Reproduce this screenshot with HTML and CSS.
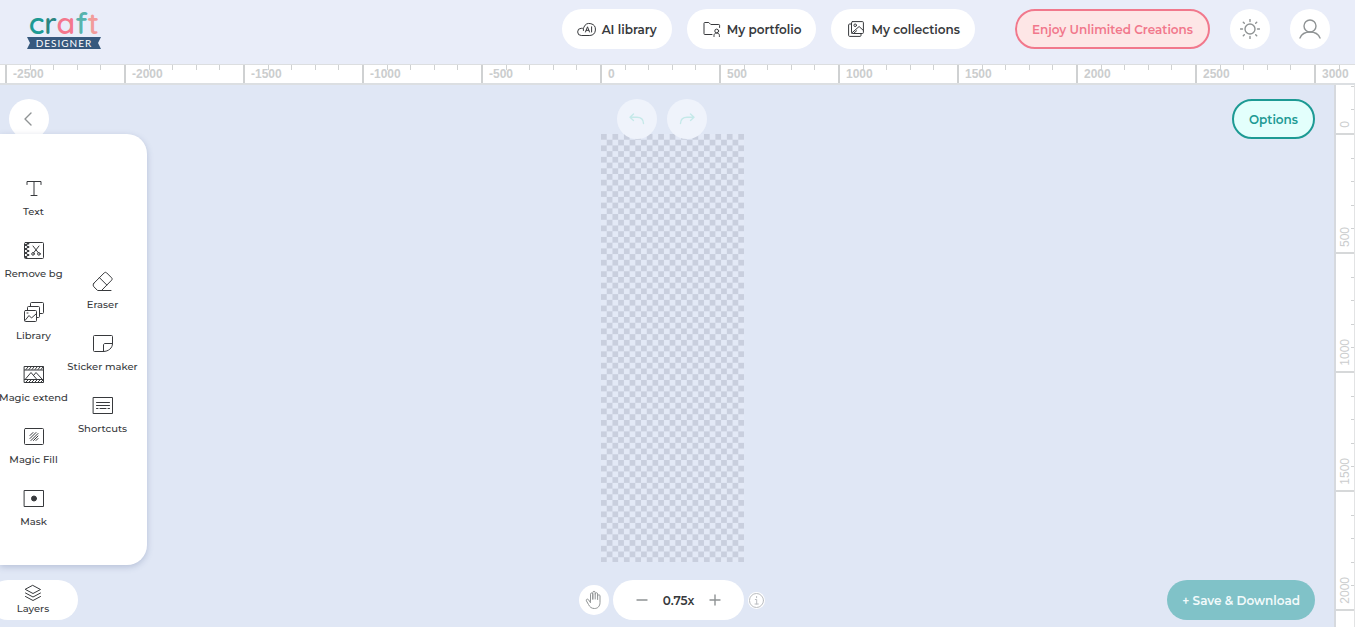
FILE: index.html
```html
<!DOCTYPE html>
<html lang="en">
<head>
  <meta charset="UTF-8">
  <meta name="viewport" content="width=device-width, initial-scale=1.0">
  <title>Craft Designer</title>
  <link rel="stylesheet" href="styles.css">
</head>
<body>
  <header class="header">
    <a href="#" class="logo" aria-label="Craft Designer">
      <span class="logo-word"><span class="c1">c</span><span class="c2">r</span><span class="c3">a</span><span class="c4">f</span><span class="c5">t</span></span>
      <span class="logo-ribbon">DESIGNER</span>
    </a>

    <nav class="nav">
      <a href="#" class="pill">
        <svg width="20" height="18" viewBox="0 0 20 18" class="icon dark">
          <path d="M5.500 15.500H4.300a3.600 3.600 0 0 1-.1-7.200h1.200M5.500 15.500h7.300A6 6 0 1 0 6.900 7.200c-.6 1.100-.7 2-.5 3.300"/>
          <path d="M8.500 12l2-5.200 2 5.200M9.200 10.300h2.600M14.600 6.800V12"/>
        </svg>
        AI library
      </a>
      <a href="#" class="pill">
        <svg width="20" height="16" viewBox="0 0 18 16" class="icon dark">
          <path d="M9 13.500H1.800a.8.8 0 0 1-.8-.8V2.300c0-.5.3-.8.8-.8h4l2 2h8c.5 0 .8.300.8.800v2.200"/>
          <circle cx="13.700" cy="10" r="1.900"/>
          <path d="M11 15.500v-1.200c0-1.300 1-2.200 2.700-2.200s2.700.900 2.700 2.200v1.200"/>
        </svg>
        My portfolio
      </a>
      <a href="#" class="pill">
        <svg width="20" height="16" viewBox="0 0 16 16" class="icon dark">
          <rect x="3.500" y=".6" width="11.900" height="11.900" rx="1"/>
          <path d="M3.500 3H1.600c-.6 0-1 .4-1 1v10.400c0 .6.4 1 1 1H12c.6 0 1-.4 1-1v-1.900"/>
          <circle cx="7.200" cy="4.300" r="1.300"/>
          <path d="M3.800 12l7.300-6.500 4.100 3.800M5.600 12.400l3-2.600"/>
        </svg>
        My collections
      </a>
    </nav>

    <button class="pill promo">Enjoy Unlimited Creations</button>
    <button class="round" aria-label="Theme">
      <svg width="20" height="20" viewBox="0 0 20 20" class="icon gray">
        <circle cx="10" cy="10" r="5"/>
        <path d="M10 .5v2M10 17.500v2M.5 10h2M17.500 10h2M3.300 3.300l1 1M15.700 15.700l1 1M3.300 16.700l1-1M15.700 4.300l1-1"/>
      </svg>
    </button>
    <button class="round" aria-label="Account">
      <svg width="22" height="20" viewBox="0 0 22 20" class="icon gray">
        <circle cx="11" cy="7" r="6"/>
        <path d="M1 19c1.500-3.800 5.300-6 10-6s8.500 2.200 10 6"/>
      </svg>
    </button>
  </header>

  <div class="ruler-x" id="ruler-x"></div>

  <main class="workspace">
    <section class="stage">
      <svg class="artboard" width="143" height="428" viewBox="0 0 600 1796">
        <defs>
          <pattern id="checker" width="48" height="48" patternUnits="userSpaceOnUse">
            <rect width="48" height="48" fill="#e3e9f6"/>
            <path d="M0 0h24v24H0zM24 24h24v24H24z" fill="#c9cfde"/>
          </pattern>
        </defs>
        <rect width="600" height="1796" fill="url(#checker)"/>
      </svg>

      <div class="top-bar">
        <button class="round back" aria-label="Back">
          <svg width="10" height="14" viewBox="0 0 10 14" class="icon gray"><path d="M7 1L1 7l6 6"/></svg>
        </button>
        <div class="history">
          <button class="round" aria-label="Undo" disabled>
            <svg width="16" height="12" viewBox="0 0 16 12" class="icon mint"><path d="M4.500 1L1 4.200l3.500 3.200M1 4.200h7c4 0 6.500 2.300 6.500 6.300"/></svg>
          </button>
          <button class="round" aria-label="Redo" disabled>
            <svg width="16" height="12" viewBox="0 0 16 12" class="icon mint"><path d="M11.500 1L15 4.200l-3.500 3.200M15 4.200H8c-4 0-6.500 2.300-6.500 6.300"/></svg>
          </button>
        </div>
        <button class="pill options">Options</button>
      </div>

      <aside class="panel">
        <div class="tools">
          <button class="tool">
            <svg width="22" height="22" viewBox="0 0 22 22" class="icon dark"><path d="M4 6.500V3.500h14v3M11 3.500v14M8 17.500h6"/></svg>
            Text
          </button>
          <button class="tool">
            <svg width="22" height="22" viewBox="0 0 22 22" class="icon dark">
              <rect x="1.500" y="2.500" width="19" height="16" rx="1"/>
              <path d="M2.500 5h1M2.500 9h1M2.500 13h1M2.500 17h1M4.500 3.500h1M4.500 7h1M4.500 11h1M4.500 15h1" stroke-width="1.800"/>
              <path d="M10 6l5.300 6.700M16 6l-5.300 6.700"/>
              <circle cx="10" cy="13.900" r="1.300"/>
              <circle cx="15.900" cy="13.900" r="1.300"/>
            </svg>
            Remove bg
          </button>
          <button class="tool">
            <svg width="22" height="22" viewBox="0 0 22 22" class="icon dark">
              <rect x="1.500" y="8.500" width="12" height="11" rx="1"/>
              <path d="M4.500 8.500V5.400c0-.6.400-.9.900-.9h10.200c.5 0 .9.400.9.900v9.200c0 .5-.4.900-.9.900h-2.100M7.500 4.500V1.400c0-.5.400-.9.900-.9h11.200c.5 0 .9.400.9.900v9.200c0 .5-.4.900-.9.900h-3.100"/>
              <path d="M2 18.500l4-5 2.500 2.500 4.500-4M4 11h1"/>
            </svg>
            Library
          </button>
          <button class="tool">
            <svg width="22" height="22" viewBox="0 0 22 22" class="icon dark">
              <rect x="1.500" y="2.500" width="19" height="16"/>
              <path d="M1.500 6h19M1.500 15.500h19M3 5.500l2-2.500M6 5.500L8 3M9 5.500l2-2.500M12 5.500L14 3M15 5.500l2-2.500M18 5.500L20 3M3 18l2-2M6 18l2-2M9 18l2-2M12 18l2-2M15 18l2-2M18 18l2-2"/>
              <path d="M2.500 15l5.500-6.500 5.500 6.500M10.500 11.500l2.500-3 6 6.500"/>
            </svg>
            Magic extend
          </button>
          <button class="tool">
            <svg width="22" height="22" viewBox="0 0 22 22" class="icon dark">
              <rect x="1.500" y="2.500" width="19" height="16" rx="1"/>
              <path d="M7 9.500L10 6.500M7 12.500l6-6M8 14.500L15 7.500M10.500 14.500l4.500-4.500M13 14.500l2-2"/>
            </svg>
            Magic Fill
          </button>
          <button class="tool">
            <svg width="22" height="22" viewBox="0 0 22 22" class="icon dark">
              <rect x="1.500" y="2.500" width="19" height="16"/>
              <circle cx="11" cy="10.500" r="2.500" fill="#37393c"/>
            </svg>
            Mask
          </button>
        </div>
        <div class="tools">
          <button class="tool">
            <svg width="22" height="22" viewBox="0 0 22 22" class="icon dark"><path d="M1.900 12.200L12.200 1.900c.8-.8 1.700-.8 2.500 0l4.900 4.900c.7.700.7 1.600 0 2.400L9.500 19.500H5.600l-3.700-3.700c-1-1.100-1-2.500 0-3.600zM7.500 6.700l7.200 7.200M8 19.500h11"/></svg>
            Eraser
          </button>
          <button class="tool">
            <svg width="22" height="22" viewBox="0 0 22 22" class="icon dark"><path d="M11.500 18.500h-9a1 1 0 0 1-1-1v-14a1 1 0 0 1 1-1h17a1 1 0 0 1 1 1v7c0 4.500-4 8-9 8zM11.500 18.500v-6.500c0-.8.600-1.500 1.500-1.500h7.500"/></svg>
            Sticker maker
          </button>
          <button class="tool">
            <svg width="22" height="22" viewBox="0 0 22 22" class="icon dark"><rect x="1.500" y="2.500" width="19" height="16"/><path d="M4.500 7.500h13M4.500 10.500h13M4.500 13.500H6M8 13.500h6M16 13.500h1.500"/></svg>
            Shortcuts
          </button>
        </div>
      </aside>

      <div class="bottom-bar">
        <button class="layers">
          <svg width="18" height="18" viewBox="0 0 18 18" class="icon dark"><path d="M9 1.500l7.500 4L9 9.500l-7.500-4zM1.500 9L9 13l7.500-4M1.500 12.500l7.500 4 7.500-4"/></svg>
          Layers
        </button>
        <div class="zoom">
          <button class="round small" aria-label="Pan">
            <svg width="18" height="20" viewBox="0 0 18 20" class="icon gray thin"><path d="M5.500 11.500V4.200c0-1.700 2.300-1.700 2.300 0v5M7.800 9V2.600c0-1.800 2.400-1.800 2.400 0V9M10.200 4c0-1.800 2.400-1.800 2.400 0v5.500M12.600 6c0-1.700 2.400-1.700 2.400 0v6.500c0 3.500-2.100 6-5.500 6-3 0-4.600-1.300-6-4L1.400 10.800c-.7-1.600 1.300-2.300 2.100-1.100l2 3"/></svg>
          </button>
          <div class="zoom-pill">
            <button class="step" aria-label="Zoom out"><svg width="12" height="12" viewBox="0 0 12 12" class="icon gray"><path d="M1 6h10"/></svg></button>
            <span>0.75x</span>
            <button class="step" aria-label="Zoom in"><svg width="12" height="12" viewBox="0 0 12 12" class="icon gray"><path d="M1 6h10M6 1v10"/></svg></button>
          </div>
          <button class="info" aria-label="Info">
            <svg width="17" height="17" viewBox="0 0 17 17" class="icon light"><circle cx="8.500" cy="8.500" r="7"/><path d="M7.300 7.500h1.400v4.500M7 12h3.300M8.600 4.500v1.200"/></svg>
          </button>
        </div>
        <button class="pill save">+ Save &amp; Download</button>
      </div>
    </section>

    <div class="ruler-y" id="ruler-y"></div>
  </main>

  <script>
    const ticks = '<div class="ticks"><i></i><i></i><i></i><i></i><i></i></div>';

    function drawRuler(id, from, to) {
      const ruler = document.getElementById(id);
      for (let value = from; value <= to; value += 500) {
        const segment = document.createElement('div');
        segment.classList.add('segment');
        segment.innerHTML = `${ticks}<span>${value}</span>`;
        ruler.appendChild(segment);
      }
    }

    drawRuler('ruler-x', -2500, 3000);
    drawRuler('ruler-y', 0, 2000);
  </script>
</body>
</html>
```
FILE: styles.css
```css
* {
  box-sizing: border-box;
}
body {
  margin: 0;
  height: 100vh;
  display: flex;
  flex-direction: column;
  overflow: hidden;
  font-family: Montserrat, Inter, sans-serif;
  font-size: 12px;
  font-weight: 600;
  color: #37393c;
  background-color: #e9edf9;
}
button {
  font: inherit;
  color: inherit;
  border: none;
  padding: 0;
  cursor: pointer;
}
a {
  color: inherit;
  text-decoration: none;
}
.icon {
  fill: none;
  stroke-width: 1;
  stroke-linecap: round;
  stroke-linejoin: round;
  flex: none;
}
.dark {
  stroke: #37393c;
}
.gray {
  stroke: #8f9394;
  stroke-width: 1.4;
}
.thin {
  stroke-width: 1;
}
.light {
  stroke: #b9bcc0;
}
.mint {
  stroke: #c5e9e9;
  stroke-width: 1.4;
}

/* header */
.header {
  height: 64px;
  flex: none;
  display: flex;
  align-items: flex-start;
  gap: 20px;
  padding: 9px 25px 0 27px;
}
.logo {
  width: 74px;
  height: 40px;
  display: flex;
  flex-direction: column;
  align-items: center;
  margin-right: auto;
}
.logo-word {
  font: 600 30px/28px Quicksand, Lato, sans-serif;
}
.c1 { color: #1d9a94; }
.c2 { color: #2b857f; }
.c3 { color: #f4778d; }
.c4 { color: #57b3ad; }
.c5 { color: #f29c9b; }
.logo-ribbon {
  align-self: stretch;
  background-color: #37597e;
  color: white;
  font: 400 10px/12px Lato, sans-serif;
  letter-spacing: 1px;
  text-align: center;
  clip-path: polygon(0 0, 100% 0, 96% 50%, 100% 100%, 0 100%, 4% 50%);
}
.nav {
  display: flex;
  gap: 15px;
  margin-right: 20px;
}
.pill {
  height: 40px;
  display: flex;
  align-items: center;
  gap: 5px;
  padding: 0 15px;
  border-radius: 20px;
  background-color: white;
  white-space: nowrap;
}
.promo {
  border: 2px solid #f1788c;
  background-color: #fde6e6;
  color: #f1788c;
}
.round {
  width: 40px;
  height: 40px;
  display: flex;
  align-items: center;
  justify-content: center;
  border-radius: 50%;
  background-color: white;
}

/* rulers */
.ruler-x {
  height: 21px;
  flex: none;
  display: flex;
  overflow: hidden;
  padding-left: 5px;
  background-color: white;
  border-top: 1px solid #dcdee0;
  border-bottom: 2px solid #dcdfe2;
}
.ruler-x .segment {
  flex: none;
  width: 119px;
  border-left: 2px solid #cfd1d2;
  color: #cbcdce;
  font: bold 12px/8px "Liberation Sans", Arial, sans-serif;
}
.ruler-x .ticks {
  display: flex;
  height: 5px;
}
.ruler-x i {
  flex: 1;
  border-right: 1px solid #cfd1d2;
}
.ruler-x i:last-child {
  border: none;
}
.ruler-x span {
  display: block;
  padding-left: 6px;
}
.ruler-y {
  width: 21px;
  flex: none;
  display: flex;
  flex-direction: column;
  overflow: hidden;
  background-color: white;
  border-left: 2px solid #d6d9de;
  border-right: 1px solid #e2e3e4;
}
.ruler-y .segment {
  flex: none;
  height: 119px;
  display: flex;
  flex-direction: row-reverse;
  align-items: flex-end;
  border-bottom: 2px solid #d6d8d9;
  color: #cbcdce;
  font: 12px/12px "Liberation Sans", Arial, sans-serif;
}
.ruler-y .segment:first-child {
  height: 50px;
}
.ruler-y .ticks {
  width: 3px;
  height: 117px;
  display: flex;
  flex-direction: column;
}
.ruler-y i {
  flex: 1;
  border-bottom: 1px solid #cfd1d2;
}
.ruler-y i:last-child {
  border: none;
}
.ruler-y span {
  writing-mode: vertical-rl;
  transform: rotate(180deg);
  padding-top: 5px;
}

/* workspace */
.workspace {
  flex: 1;
  min-height: 0;
  display: flex;
  background-color: #e0e7f5;
}
.stage {
  flex: 1;
  position: relative;
  overflow: hidden;
  display: flex;
  flex-direction: column;
  padding: 14px 0 7px;
}
.artboard {
  position: absolute;
  left: 601px;
  top: 49px;
}
.top-bar,
.bottom-bar {
  position: relative;
  display: grid;
  grid-template-columns: 1fr auto 1fr;
  align-items: center;
}
.top-bar {
  padding: 0 19px 0 9px;
}
.history {
  display: flex;
  gap: 10px;
}
.history .round {
  background-color: #eff3fb;
}
.options {
  justify-self: end;
  border: 2px solid #1d9a94;
  background-color: #e3fffc;
  color: #1d9a94;
}
.panel {
  position: relative;
  flex: 1;
  width: 147px;
  display: grid;
  grid-template-columns: 67px 71px;
  margin: -5px 0 15px;
  border-radius: 0 20px 20px 0;
  background-color: white;
  box-shadow: 0 2px 6px rgba(60, 80, 130, 0.25);
}
.tools {
  display: flex;
  flex-direction: column;
  justify-content: center;
}
.tool {
  height: 62px;
  display: flex;
  flex-direction: column;
  align-items: center;
  gap: 4px;
  padding: 14px 0 6px;
  background: none;
  font-size: 10px;
  font-weight: 500;
  line-height: 16px;
  white-space: nowrap;
}
.bottom-bar {
  padding: 0 19px 0 29px;
}
.layers {
  width: 90px;
  height: 40px;
  display: flex;
  flex-direction: column;
  align-items: center;
  margin-left: -41px;
  padding-top: 4px;
  border-radius: 20px;
  background-color: white;
  font-size: 10px;
  font-weight: 500;
  line-height: 14px;
}
.zoom {
  display: flex;
  align-items: center;
  gap: 4px;
}
.small {
  width: 30px;
  height: 30px;
}
.zoom-pill {
  width: 131px;
  height: 40px;
  display: flex;
  align-items: center;
  justify-content: space-between;
  padding: 0 23px;
  border-radius: 20px;
  background-color: white;
}
.step {
  display: flex;
  background: none;
}
.info {
  width: 17px;
  height: 17px;
  display: flex;
  border-radius: 50%;
  background-color: white;
}
.save {
  justify-self: end;
  background-color: #80c2c8;
  color: #f2fafb;
}
```
